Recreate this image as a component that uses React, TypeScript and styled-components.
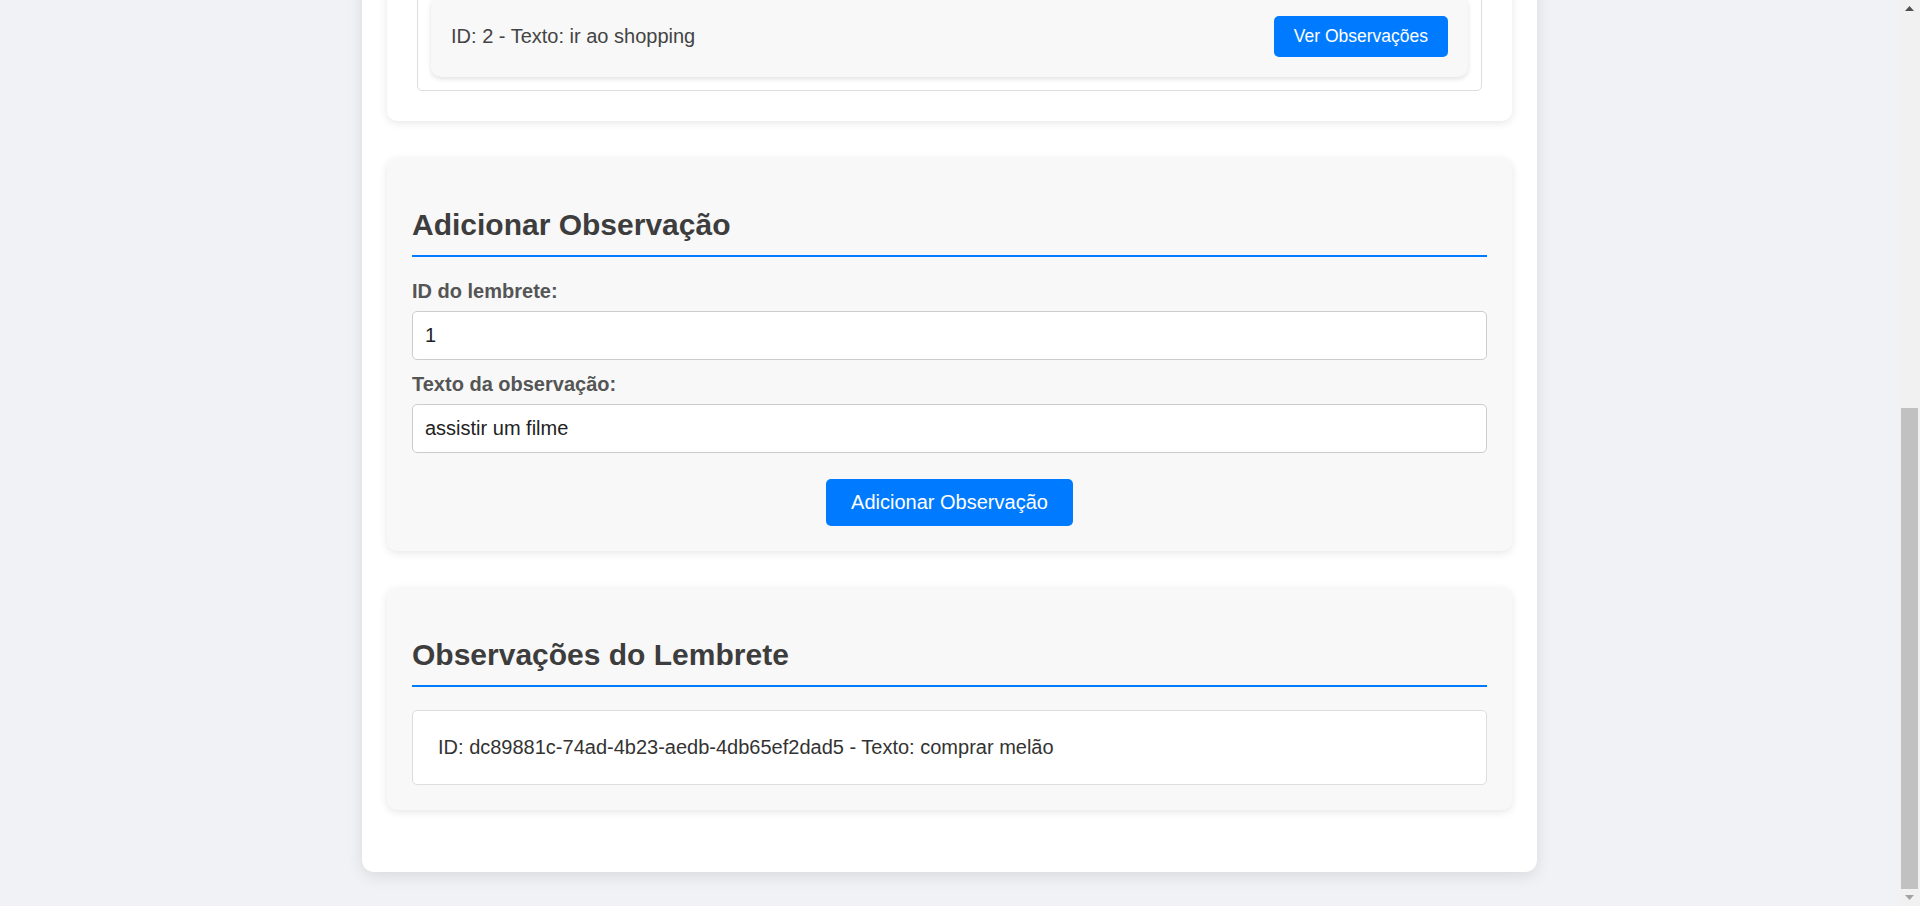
import React, { useLayoutEffect, useState } from "react";
import styled, { createGlobalStyle } from "styled-components";

const COLORS = {
  page: "#f0f2f5",
  panel: "#ffffff",
  card: "#f8f8f8",
  blue: "#007bff",
  heading: "#3d3d3d",
  label: "#555555",
  text: "#333333",
  border: "#dddddd",
};

const SCROLLBAR = 21;
const ARROW = 17;

type Lembrete = { id: number; texto: string };
type Observacao = { id: string; texto: string };

const lembretes: Lembrete[] = [
  { id: 1, texto: "estudar react" },
  { id: 2, texto: "ir ao shopping" },
];

const observacoes: Observacao[] = [
  { id: "dc89881c-74ad-4b23-aedb-4db65ef2dad5", texto: "comprar melão" },
];

// window scrollbar drawn by hand, the headless browser hides the native one
const Scrollbar: React.FC = () => {
  const [thumb, setThumb] = useState({ top: 0, height: 0 });

  useLayoutEffect(() => {
    const update = () => {
      const doc = document.documentElement;
      const track = window.innerHeight - ARROW * 2;
      const total = doc.scrollHeight;
      setThumb({
        top: (track * window.scrollY) / total,
        height: (track * window.innerHeight) / total,
      });
    };
    update();
    window.addEventListener("scroll", update);
    return () => window.removeEventListener("scroll", update);
  }, []);

  return (
    <ScrollbarRail>
      <ArrowButton>
        <svg width="9" height="5" viewBox="0 0 9 5">
          <polygon points="0,5 9,5 4.5,0" fill="#505050" />
        </svg>
      </ArrowButton>
      <ScrollTrack>
        <ScrollThumb style={{ top: thumb.top, height: thumb.height }} />
      </ScrollTrack>
      <ArrowButton>
        <svg width="9" height="5" viewBox="0 0 9 5">
          <polygon points="0,0 9,0 4.5,5" fill="#a3a3a3" />
        </svg>
      </ArrowButton>
    </ScrollbarRail>
  );
};

const App: React.FC = () => {
  const [textoLembrete, setTextoLembrete] = useState("");
  const [idLembrete, setIdLembrete] = useState("1");
  const [textoObservacao, setTextoObservacao] = useState("assistir um filme");

  // the screenshot shows the bottom of the page
  useLayoutEffect(() => {
    window.scrollTo(0, document.documentElement.scrollHeight);
  }, []);

  return (
    <>
      <GlobalStyle />
      <Container>
        <Title>Gerenciador de Lembretes</Title>

        <Card>
          <SectionTitle>Adicionar Lembrete</SectionTitle>
          <Label htmlFor="texto-lembrete">Texto do lembrete:</Label>
          <Input
            id="texto-lembrete"
            value={textoLembrete}
            onChange={(e) => setTextoLembrete(e.target.value)}
          />
          <PrimaryButton>Adicionar Lembrete</PrimaryButton>
        </Card>

        <Card $plain>
          <SectionTitle>Lista de Lembretes</SectionTitle>
          <ReminderList>
            {lembretes.map((l) => (
              <ReminderItem key={l.id}>
                <span>
                  ID: {l.id} - Texto: {l.texto}
                </span>
                <SmallButton>Ver Observações</SmallButton>
              </ReminderItem>
            ))}
          </ReminderList>
        </Card>

        <Card>
          <SectionTitle>Adicionar Observação</SectionTitle>
          <Label htmlFor="id-lembrete">ID do lembrete:</Label>
          <Input
            id="id-lembrete"
            value={idLembrete}
            onChange={(e) => setIdLembrete(e.target.value)}
          />
          <Label htmlFor="texto-observacao">Texto da observação:</Label>
          <Input
            id="texto-observacao"
            value={textoObservacao}
            onChange={(e) => setTextoObservacao(e.target.value)}
          />
          <PrimaryButton>Adicionar Observação</PrimaryButton>
        </Card>

        <Card>
          <SectionTitle>Observações do Lembrete</SectionTitle>
          {observacoes.map((o) => (
            <ObservationItem key={o.id}>
              ID: {o.id} - Texto: {o.texto}
            </ObservationItem>
          ))}
        </Card>
      </Container>
      <Scrollbar />
    </>
  );
};

export default App;

const GlobalStyle = createGlobalStyle`
  *, *::before, *::after {
    box-sizing: border-box;
  }

  html {
    scroll-behavior: auto;
  }

  body {
    margin: 0;
    padding-right: ${SCROLLBAR}px;
    background-color: ${COLORS.page};
    font-family: "Liberation Sans", Arial, sans-serif;
    color: ${COLORS.text};
  }

  ::-webkit-scrollbar {
    display: none;
  }
`;

const ScrollbarRail = styled.div`
  position: fixed;
  top: 0;
  right: 0;
  bottom: 0;
  width: ${SCROLLBAR}px;
  display: flex;
  flex-direction: column;
  background-color: #f1f1f1;
`;

const ArrowButton = styled.div`
  display: flex;
  justify-content: center;
  align-items: center;
  height: ${ARROW}px;
  flex-shrink: 0;
`;

const ScrollTrack = styled.div`
  position: relative;
  flex: 1;
`;

const ScrollThumb = styled.div`
  position: absolute;
  left: 2px;
  right: 2px;
  background-color: #c1c1c1;
`;

const Container = styled.main`
  width: 1175px;
  margin: 34px auto;
  padding: 25px;
  background-color: ${COLORS.panel};
  border-radius: 12px;
  box-shadow: 0 4px 16px rgba(0, 0, 0, 0.1);
`;

const Title = styled.h1`
  margin: 21px 0 37px;
  font-size: 40px;
  text-align: center;
  color: ${COLORS.heading};
`;

const Card = styled.section<{ $plain?: boolean }>`
  margin-bottom: 37px;
  padding: ${({ $plain }) => ($plain ? "30px" : "25px")};
  background-color: ${({ $plain }) => ($plain ? COLORS.panel : COLORS.card)};
  border-radius: 10px;
  box-shadow: 0 2px 8px rgba(0, 0, 0, 0.1);
`;

const SectionTitle = styled.h2`
  margin: 25px 0 23px;
  padding-bottom: 13px;
  font-size: 30px;
  color: ${COLORS.heading};
  border-bottom: 2px solid ${COLORS.blue};
`;

const Label = styled.label`
  display: block;
  margin-bottom: 8px;
  font-size: 20px;
  font-weight: bold;
  color: ${COLORS.label};
`;

const Input = styled.input`
  display: block;
  width: 100%;
  margin-bottom: 13px;
  padding: 12px;
  font-family: inherit;
  font-size: 20px;
  color: #222;
  background-color: #fff;
  border: 1px solid #ccc;
  border-radius: 5px;
  outline: none;
`;

const PrimaryButton = styled.button`
  display: block;
  margin: 26px auto 0;
  padding: 12px 25px;
  font-family: inherit;
  font-size: 20px;
  color: #fff;
  background-color: ${COLORS.blue};
  border: none;
  border-radius: 5px;
  cursor: pointer;
`;

const ReminderList = styled.div`
  display: flex;
  flex-direction: column;
  gap: 12px;
  padding: 13px;
  border: 1px solid ${COLORS.border};
  border-radius: 5px;
`;

const ReminderItem = styled.div`
  display: flex;
  justify-content: space-between;
  align-items: center;
  padding: 20px;
  font-size: 20px;
  color: #444;
  background-color: ${COLORS.card};
  border-radius: 10px;
  box-shadow: 0 2px 5px rgba(0, 0, 0, 0.12);
`;

const SmallButton = styled.button`
  padding: 10px 20px;
  font-family: inherit;
  font-size: 17.5px;
  color: #fff;
  background-color: ${COLORS.blue};
  border: none;
  border-radius: 5px;
  cursor: pointer;
`;

const ObservationItem = styled.div`
  padding: 25px;
  font-size: 20px;
  color: ${COLORS.text};
  background-color: #fff;
  border: 1px solid ${COLORS.border};
  border-radius: 5px;
`;
